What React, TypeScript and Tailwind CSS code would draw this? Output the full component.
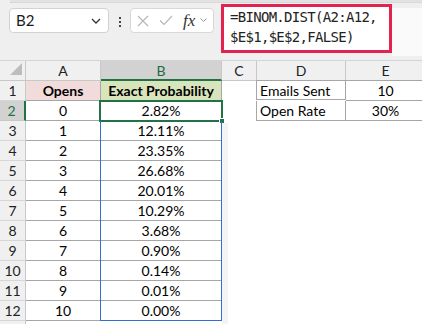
import React from "react";

const rows: [string, string][] = [
  ["0", "2.82%"],
  ["1", "12.11%"],
  ["2", "23.35%"],
  ["3", "26.68%"],
  ["4", "20.01%"],
  ["5", "10.29%"],
  ["6", "3.68%"],
  ["7", "0.90%"],
  ["8", "0.14%"],
  ["9", "0.01%"],
  ["10", "0.00%"],
];

function RowHead({ n, sel }: { n: string; sel?: boolean }) {
  return sel ? (
    <div className="w-[26px] shrink-0 h-full flex items-center justify-center bg-[#d2d2d2] border-r-2 border-b border-r-[#217346] border-b-[#c8c8c8] text-[#217346] pr-[1px]">
      {n}
    </div>
  ) : (
    <div className="w-[26px] shrink-0 h-full flex items-center justify-center bg-[#f0f0f0] border-r border-b border-r-[#c8c8c8] border-b-[#d6d6d6] text-[#222]">
      {n}
    </div>
  );
}

export default function App() {
  return (
    <div
      className="w-[422px] h-[324px] overflow-hidden bg-white relative"
      style={{ fontFamily: "Lato, 'Liberation Sans', sans-serif" }}
    >
      {/* toolbar */}
      <div className="h-[61px] bg-[#efefef] relative border-b border-[#d4d4d4]">
        <div className="h-[3px] ml-[10px] bg-[#e2e2e2] border-b border-dotted border-[#d0d0d0]" />
        <div className="flex items-start">
          {/* name box */}
          <div className="mt-[5px] ml-[9px] w-[100px] h-[25px] bg-white border border-[#d2d2d2] rounded-[4px] flex items-center pl-[6px] pr-[6px] text-[15px] text-[#1a1a1a]">
            <span className="flex-1">B2</span>
            <svg width="10" height="6" viewBox="0 0 10 6" className="mr-[1px]">
              <path d="M1 1 L5 5 L9 1" fill="none" stroke="#333" strokeWidth="1.3" />
            </svg>
          </div>
          {/* dots */}
          <div className="mt-[14px] ml-[10px] flex flex-col gap-[2px]">
            <div className="w-[2px] h-[2px] bg-[#444]" />
            <div className="w-[2px] h-[2px] bg-[#444]" />
            <div className="w-[2px] h-[2px] bg-[#444]" />
          </div>
          {/* fx box */}
          <div className="mt-[5px] ml-[9px] w-[84px] h-[25px] bg-white border border-[#d8d8d8] rounded-[4px] flex items-center pl-[6px]">
            <svg width="12" height="12" viewBox="0 0 12 12">
              <path d="M1 1 L11 11 M11 1 L1 11" stroke="#b5b5b5" strokeWidth="1.1" />
            </svg>
            <svg width="14" height="11" viewBox="0 0 14 11" className="ml-[10px]">
              <path d="M1 5.5 L5 9.5 L13 1" fill="none" stroke="#b5b5b5" strokeWidth="1.1" />
            </svg>
            <span
              className="ml-[10px] text-[17px] italic text-[#333] leading-none"
              style={{ fontFamily: "'Liberation Serif', serif" }}
            >
              fx
            </span>
            <svg width="7" height="5" viewBox="0 0 7 5" className="ml-[5px]">
              <path d="M0.5 0.5 L3.5 3.5 L6.5 0.5" fill="none" stroke="#999" strokeWidth="1" />
            </svg>
          </div>
          {/* formula input */}
          <div className="ml-[7px] mt-[1px] w-[171px] h-[49px] bg-white border-[3px] border-[#e2234f] pl-[6px] pt-[1px]">
            <div
              className="text-[14px] leading-[19.5px] text-[#222] tracking-[-0.7px]"
              style={{ fontFamily: "'DejaVu Sans Mono', 'Liberation Mono', monospace" }}
            >
              <div>=BINOM.DIST(A2:A12,</div>
              <div>$E$1,$E$2,FALSE)</div>
            </div>
          </div>
          <div className="mt-[5px] flex-1 h-[48px] bg-[#fafafa]" />
        </div>
      </div>

      {/* grid */}
      <div className="relative text-[14px] text-black">
        {/* header row */}
        <div className="flex h-[20px]">
          <div className="w-[26px] shrink-0 h-full bg-[#f0f0f0] border-r border-b border-[#c8c8c8] relative">
            <svg width="13" height="13" viewBox="0 0 13 13" className="absolute left-[10px] top-[2px]">
              <path d="M12 0 L12 12 L0 12 Z" fill="#bdbdbd" />
            </svg>
          </div>
          <div className="w-[75px] shrink-0 h-full bg-[#f0f0f0] border-r border-b border-[#c8c8c8] flex items-center justify-center text-[#222]">
            A
          </div>
          <div className="w-[121px] shrink-0 h-full bg-[#d2d2d2] border-r border-r-[#c8c8c8] border-b-2 border-b-[#217346] flex items-center justify-center text-[#1e6b43]">
            B
          </div>
          <div className="w-[35px] shrink-0 h-full bg-[#f0f0f0] border-r border-b border-[#c8c8c8] flex items-center justify-center text-[#222]">
            C
          </div>
          <div className="w-[89px] shrink-0 h-full bg-[#f0f0f0] border-r border-b border-[#c8c8c8] flex items-center justify-center text-[#222]">
            D
          </div>
          <div className="w-[80px] shrink-0 h-full bg-[#f0f0f0] border-r border-b border-[#c8c8c8] flex items-center justify-center text-[#222]">
            E
          </div>
        </div>

        {/* row 1 */}
        <div className="flex h-[20px]">
          <RowHead n="1" />
          <div className="w-[75px] shrink-0 h-full bg-[#f2dcdb] border-r border-b border-[#a6a6a6] flex items-center justify-center font-bold">
            Opens
          </div>
          <div className="w-[121px] shrink-0 h-full bg-[#d8e4bc] border-r border-b border-[#a6a6a6] flex items-center justify-center font-bold whitespace-nowrap">
            Exact Probability
          </div>
          <div className="w-[34px] shrink-0 h-full" />
          <div className="w-[90px] shrink-0 h-full border-l border-r border-t border-b border-[#a6a6a6] flex items-center pl-[3px] mt-[-1px] h-[21px]">
            Emails Sent
          </div>
          <div className="w-[80px] shrink-0 border-r border-t border-b border-[#a6a6a6] flex items-center justify-center mt-[-1px] h-[21px]">
            10
          </div>
        </div>

        {rows.map(([a, b], i) => {
          const r = i + 2;
          return (
            <div key={r} className="flex h-[20px]">
              <RowHead n={String(r)} sel={r === 2} />
              <div className="w-[75px] shrink-0 h-full border-r border-b border-[#a6a6a6] flex items-center justify-center">
                {a}
              </div>
              <div className="w-[121px] shrink-0 h-full border-r border-b border-[#a6a6a6] flex items-center justify-center relative">
                {b}
                {r === 2 && (
                  <>
                    <div className="absolute left-[-2px] top-[-1px] right-[-2px] bottom-[-2px] border-2 border-[#217346]" />
                    <div className="absolute right-[-4px] bottom-[-4px] w-[6px] h-[6px] bg-[#217346] border border-white" />
                  </>
                )}
              </div>
              {r === 2 && (
                <>
                  <div className="w-[34px] shrink-0 h-full" />
                  <div className="w-[90px] shrink-0 h-full border-l border-r border-b border-[#a6a6a6] flex items-center pl-[3px]">
                    Open Rate
                  </div>
                  <div className="w-[80px] shrink-0 h-full border-r border-b border-[#a6a6a6] flex items-center justify-center">
                    30%
                  </div>
                </>
              )}
            </div>
          );
        })}
        <div className="flex h-[10px]">
          <div className="w-[26px] shrink-0 h-full bg-[#f0f0f0] border-r border-[#c8c8c8]" />
        </div>

        {/* copy range outline B3:B12 */}
        <div className="absolute left-[100px] top-[60px] w-[122px] h-[200px] border-l border-r border-b border-[#2f6fd6]" />
        <div className="absolute left-[222px] top-[62px] w-[6px] h-[202px] bg-[#f4f4f4]" />
      </div>
    </div>
  );
}
